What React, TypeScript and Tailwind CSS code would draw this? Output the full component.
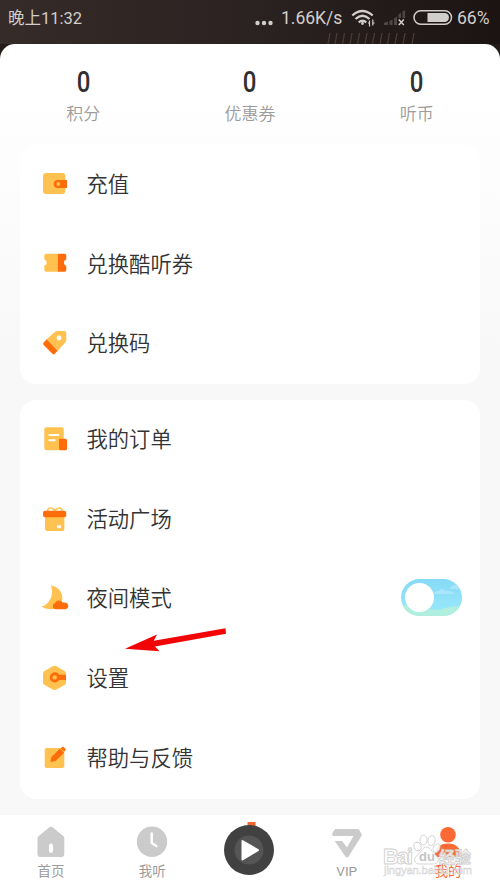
import { useState } from "react";
import type { ReactNode } from "react";

const stats = [
  { label: "积分", value: 0 },
  { label: "优惠券", value: 0 },
  { label: "听币", value: 0 },
];

const WalletIcon = () => (
  <>
    <rect x="3" y="4" width="22.3" height="21" rx="3" fill="#ffc250" />
    <path d="M17.7 11H27v8h-9.3a4 4 0 0 1 0-8z" fill="#ff6d0a" />
    <circle cx="18.3" cy="15" r="1.9" fill="#ffc250" />
  </>
);

const TicketIcon = () => (
  <>
    <path d="M6 4.7h11.7v18H6a1.7 1.7 0 0 1-1.7-1.7v-4.2a3.2 3.2 0 0 0 0-6.2V6.4A1.7 1.7 0 0 1 6 4.7z" fill="#ffc250" />
    <path d="M17.7 4.7h6.9a1.7 1.7 0 0 1 1.7 1.7v4.2a3.2 3.2 0 0 0 0 6.2V21a1.7 1.7 0 0 1-1.7 1.7h-6.9z" fill="#ff6d0a" />
  </>
);

const TagIcon = () => (
  <>
    <path d="M15.4 3.6 17 2.9l7.3.2a2 2 0 0 1 2 2v7.3l-.6 1.6-8 8.7-11-11.4z" fill="#ffc250" />
    <path d="m6.7 11.3 11 11.4-2.9 3.1q-1.2 1-2.4 0l-8.7-8.7q-1.2-1.3 0-2.6z" fill="#ff6d0a" />
    <circle cx="19" cy="10" r="2.4" fill="#fff" />
  </>
);

const OrderIcon = () => (
  <>
    <rect x="4.3" y="3.3" width="19.4" height="22.9" rx="2.2" fill="#ffc250" />
    <path d="M9.4 11h9M9.4 16.3h5.2" stroke="#fff" strokeWidth="2" strokeLinecap="round" />
    <path d="M19 14.7h6.2a1.9 1.9 0 0 1 1.9 1.9v7.8a1.9 1.9 0 0 1-1.9 1.9h-4.3a1.9 1.9 0 0 1-1.9-1.9z" fill="#ff6d0a" />
  </>
);

const GiftIcon = () => (
  <>
    <path d="M7.5 7c0-4 5.5-4 7.3 0 1.8-4 7.3-4 7.3 0" fill="none" stroke="#ffc250" strokeWidth="1.5" />
    <path d="M5 12h19.4v12.7a2.2 2.2 0 0 1-2.2 2.2h-15A2.2 2.2 0 0 1 5 24.7z" fill="#ffc250" />
    <rect x="3" y="6.7" width="23.2" height="6.5" rx="2" fill="#ff6d0a" />
    <path d="m17 21.5 1 2.2 1-2 1 2 1-2.2" fill="none" stroke="#fff" strokeWidth="1.2" />
  </>
);

const MoonIcon = () => (
  <>
    <path d="M10.8 2.3c7 1.2 11.6 6.7 11.6 13.2 0 6.3-4.8 10.9-11.2 10.7-4.5 0-7.8-1-9.5-2.6C9 21.5 14.8 12.5 10.8 2.3z" fill="#ffc250" />
    <path d="M16 26.3a3.2 3.2 0 0 1-.8-6.3c1-3.2 5.6-3.6 7.4-.4 3.7-.6 5.7 1.2 5.7 3.5 0 2-1.5 3.2-3.3 3.2z" fill="#ff6d0a" />
  </>
);

const HexIcon = () => (
  <>
    <path d="M13.2 3.1a3 3 0 0 1 2.8 0l8.5 4.8A3 3 0 0 1 26 10.4v9a3 3 0 0 1-1.5 2.5L16 26.7a3 3 0 0 1-2.8 0l-8.7-4.8A3 3 0 0 1 3 19.4v-9a3 3 0 0 1 1.5-2.5z" fill="#ffc250" />
    <path d="M19.3 11.8H26v5.2h-6.7a5.1 5.1 0 1 1 0-5.2z" fill="#ff6d0a" />
    <circle cx="14.7" cy="14.4" r="2.2" fill="#ffc250" />
  </>
);

const EditIcon = () => (
  <>
    <rect x="4.7" y="5" width="19.6" height="20" rx="1.8" fill="#ffc250" />
    <path d="m10.4 19 1-5L20 5.5l4.2 4.2-8.7 8.3z" fill="#ff6d0a" />
    <path d="m20.8 5.2 1.3-1.2q.8-.6 1.5 0l1.8 1.7q.7.8 0 1.6l-1.2 1.3z" fill="#ff6d0a" />
  </>
);

const groups: { label: string; icon: () => ReactNode; toggle?: boolean }[][] = [
  [
    { label: "充值", icon: WalletIcon },
    { label: "兑换酷听券", icon: TicketIcon },
    { label: "兑换码", icon: TagIcon },
  ],
  [
    { label: "我的订单", icon: OrderIcon },
    { label: "活动广场", icon: GiftIcon },
    { label: "夜间模式", icon: MoonIcon, toggle: true },
    { label: "设置", icon: HexIcon },
    { label: "帮助与反馈", icon: EditIcon },
  ],
];

const StatusBar = () => (
  <div className="relative flex h-11 items-start bg-linear-to-r from-[#352b29] via-[#2b2321] to-[#1c1412] pt-[6px] pr-2 pl-2 leading-6 text-[#d2cecc]">
    <span className="pt-px text-[16.5px]">晚上11:32</span>
    <svg className="absolute top-[33px] left-[325px]" width="95" height="11" fill="none" stroke="#4d3b30" strokeWidth="1.3">
      <path d="m5 0-2 11M12 0l-2 11M19.5 0l-2 11M27 0l-2 11M34.5 0l-2 11M42 0l-2 11M49.5 0l-2 11M57 0l-2 11M64.5 0l-2 11M72 0l-2 11M80 0l-2 11M89 0l-2 11" />
    </svg>
    <div className="ml-auto flex items-center">
      <svg width="18" height="24" fill="#d2cecc">
        <circle cx="2.5" cy="17" r="2.2" />
        <circle cx="9" cy="17" r="2.2" />
        <circle cx="15.5" cy="17" r="2.2" />
      </svg>
      <span className="ml-2 w-[62px] text-[17.5px]">1.66K/s</span>
      <svg className="ml-[8px]" width="24" height="24" fill="none" stroke="#d2cecc" strokeWidth="2.3">
        <path d="M1.3 9.5q10-9 20.4 0M4.5 13q7-6.5 14 0M7.7 16.3q3.8-3.2 7.6 0" />
        <circle cx="11.5" cy="17.5" r="1.4" fill="#d2cecc" stroke="none" />
        <path d="M18.5 14.5v6M21.8 13.5v6M17 17h2M22 17h1.5" strokeWidth="1.2" />
      </svg>
      <svg className="ml-[8px]" width="24" height="24" fill="#4f4745">
        <path d="M1 19v-2.2l4-1.3V19zM6.5 19v-4l3-1.5V19zM11 19v-6.5l3-2V19zM15.5 12V8.5l2.5-1.8V12zM19.5 12V5.5L22 4v8z" />
        <path d="m15.8 13.5 5 5.5M20.8 13.5l-5 5.5" stroke="#d2cecc" strokeWidth="1.5" />
      </svg>
      <svg className="ml-[6px]" width="40" height="24">
        <rect x="1" y="4.8" width="37.5" height="13.4" rx="6.7" fill="none" stroke="#d2cecc" strokeWidth="1.5" />
        <path d="M14.5 7H31.5a4.5 4.5 0 0 1 0 9h-17z" fill="#d2cecc" />
      </svg>
      <span className="ml-1 w-[35px] text-[17.5px]">66%</span>
    </div>
  </div>
);

const NightSwitch = () => {
  const [on, setOn] = useState(false);

  return (
    <button
      aria-label="夜间模式"
      onClick={() => setOn(!on)}
      className="relative mr-[18px] mb-[3px] ml-auto h-[37px] w-[61px] overflow-hidden rounded-full bg-linear-to-b from-[#86daf6] to-[#9be9fb]"
    >
      <svg width="61" height="37">
        <path d="M33 15q0-3 4-3 4-4 7 0 7-1 10 3zM49 9q3-4 9-3l3 4H50z" fill="#aae6fa" />
        <path d="M0 25q9 3 18 4l20 2q10-4 23-4v10H0z" fill="#b0eedd" />
      </svg>
      <span className={`absolute top-1 h-[29px] w-[29px] rounded-full bg-white ${on ? "right-1" : "left-1"}`} />
    </button>
  );
};

const Watermark = () => (
  <svg className="pointer-events-none absolute right-0 bottom-0" width="120" height="62" fontFamily="'Liberation Sans', 'Noto Sans CJK SC', sans-serif">
    <g fill="#fff" fillOpacity=".9" stroke="#d0d0d0" strokeWidth=".9">
      <text x="3" y="36.5" fontSize="22" fontWeight="700" textLength="30">Bai</text>
      <ellipse cx="37.5" cy="19.5" rx="3.5" ry="4.5" transform="rotate(-20 37.5 19.5)" />
      <ellipse cx="43.5" cy="13" rx="3.5" ry="5" />
      <ellipse cx="51.5" cy="13.5" rx="3.5" ry="5" transform="rotate(15 51.5 13.5)" />
      <ellipse cx="56.5" cy="21" rx="3.2" ry="4.5" transform="rotate(25 56.5 21)" />
      <path d="M46.5 20c-4 0-5 5-9 8-5 4-3 9 2 9h14c5 0 7-5 2-9-4-3-5-8-9-8z" />
      <text x="59" y="36" fontSize="16" fontWeight="700" textLength="32">经验</text>
      <text x="4" y="47" fontSize="11" strokeWidth=".5" fillOpacity=".5" textLength="88">jingyan.baidu.com</text>
    </g>
    <text x="39" y="34" fontSize="13" fontWeight="700" fill="#c4c4c4">du</text>
  </svg>
);

const NavItem = ({ label, active, children }: { label: string; active?: boolean; children: ReactNode }) => (
  <button className={`flex w-[60px] flex-col items-center pt-[10px] ${active ? "text-[#fb6a3a]" : "text-[#9c9c9c]"}`}>
    <svg width="34" height="34" fill={active ? "#fb6a35" : "#cbcbcb"}>
      {children}
    </svg>
    <span className="mt-1 text-[13.5px] leading-4">{label}</span>
  </button>
);

const BottomNav = () => (
  <nav className="relative flex h-[74px] items-start justify-between bg-white pr-[22px] pl-[21px]">
    <NavItem label="首页">
      <path d="M14.8 2.7q2.2-1.7 4.4 0l10 8.3a3 3 0 0 1 1.1 2.3V29a3 3 0 0 1-3 3H6.5a3 3 0 0 1-3-3V13.3A3 3 0 0 1 4.7 11z" />
      <path d="M17 20.5v5.5" stroke="#fff" strokeWidth="4" strokeLinecap="round" />
    </NavItem>
    <NavItem label="我听">
      <circle cx="17" cy="16.7" r="15.2" />
      <path d="M16.7 8.5V18l4.6 3" fill="none" stroke="#fff" strokeWidth="2.5" strokeLinecap="round" strokeLinejoin="round" />
    </NavItem>
    <button aria-label="播放" className="mt-[6px] mr-[2px] -ml-[2px]">
      <svg width="52" height="56">
        <path d="M25.5 1h8v6h-8z" fill="#f2662e" />
        <circle cx="27" cy="29" r="25" fill="#414141" />
        <circle cx="27" cy="29" r="14.5" fill="#555" />
        <path d="M20.5 20v18.5L36 29.2z" fill="#fff" stroke="#fff" strokeWidth="2" strokeLinejoin="round" />
      </svg>
    </button>
    <NavItem label="VIP">
      <path d="M6 4h21q1.5 0 2.3 1l2 3.5q.8 1.4 0 2.7L18.6 31.5q-1.6 2.2-3.2 0L4.7 16h7.5l4.8 6.5L23.5 11H3q-1.5-1.5-.5-3l1.7-3Q5 4 6 4z" />
    </NavItem>
    <NavItem label="我的" active>
      <circle cx="17" cy="9.7" r="7.8" />
      <path d="M3.5 32q1-13.5 13.5-13.5T30.5 32z" />
    </NavItem>
    <Watermark />
  </nav>
);

const App = () => {
  return (
    <div className="relative flex h-[889px] w-[500px] flex-col overflow-hidden bg-[#251c1a] font-[Roboto,'Noto_Sans_CJK_SC',sans-serif]">
      <StatusBar />

      <main className="flex flex-1 flex-col rounded-t-[15px] bg-linear-to-b from-white from-5% to-[#f8f8f8] to-40% px-5">
        {/* Stats */}
        <div className="-mx-5 flex h-[101px] pt-[22px]">
          {stats.map((item) => (
            <div key={item.label} className="flex flex-1 flex-col items-center">
              <span className="scale-x-80 text-[30px] leading-8 font-medium text-[#303030]">{item.value}</span>
              <span className="mt-1 text-[17px] leading-6 font-[350] text-[#9c9c9c]">{item.label}</span>
            </div>
          ))}
        </div>

        {/* Menu cards */}
        <div className="flex flex-col gap-4">
          {groups.map((items, i) => (
            <section key={i} className="rounded-2xl bg-white">
              {items.map(({ label, icon: Icon, toggle }) => (
                <div key={label} className="flex h-[79.7px] items-center pl-5">
                  <svg className="mb-[2px]" width="30" height="30">
                    <Icon />
                  </svg>
                  <span className="ml-[16.5px] text-[21.3px] leading-8 font-[350] text-[#333]">{label}</span>
                  {toggle && <NightSwitch />}
                </div>
              ))}
            </section>
          ))}
        </div>
      </main>

      {/* Pointer to the settings row */}
      <svg className="pointer-events-none absolute top-[625px] left-[120px]" width="110" height="30">
        <path d="M5 23.8 37 9.5l-3.2 6.2L105.5 3.3l.5 5.5L35 21.5l4.5 4.8z" fill="#f20505" />
      </svg>

      <BottomNav />
    </div>
  );
};

export default App;
